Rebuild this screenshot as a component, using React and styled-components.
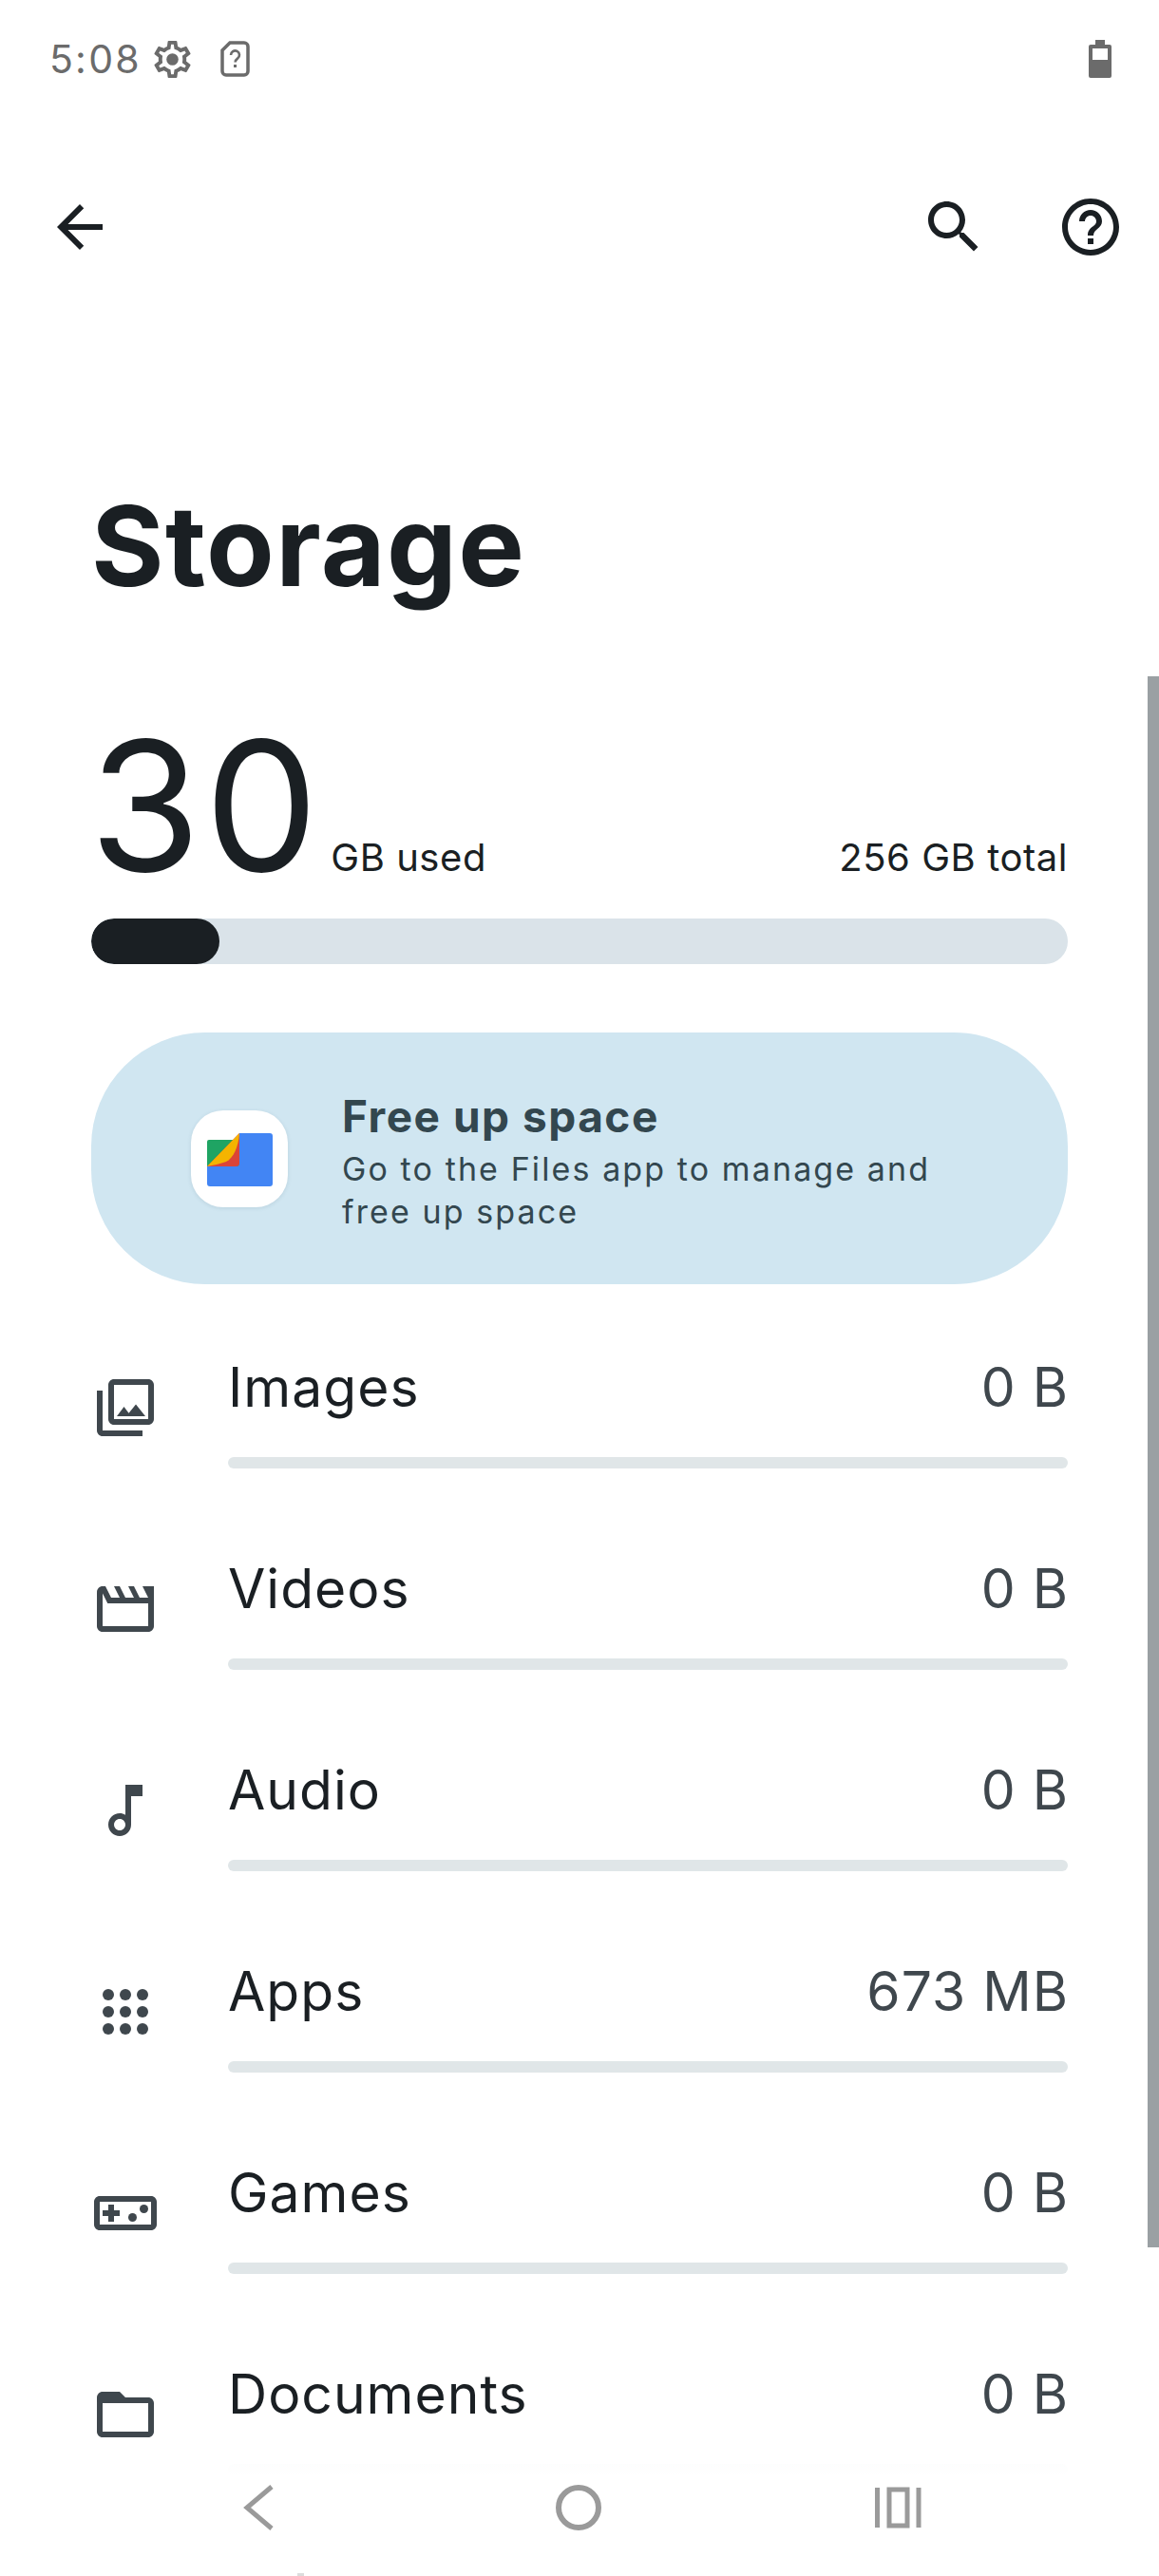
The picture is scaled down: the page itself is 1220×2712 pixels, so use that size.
import React from "react";
import styled, { createGlobalStyle } from "styled-components";

const GlobalStyle = createGlobalStyle`
  html, body {
    margin: 0;
    padding: 0;
    background: #fff;
  }
  body {
    font-family: Inter, "Open Sans", sans-serif;
    color: #1a1f23;
    overflow: hidden;
  }
`;

const Page = styled.div`
  position: relative;
  width: 1220px;
  height: 2712px;
  overflow: hidden;
  background: #fff;
`;

const StatusBar = styled.div`
  display: flex;
  align-items: center;
  height: 124px;
  padding: 0 50px 0 52px;
  color: #6b6b6b;
`;
const StatusTime = styled.div`
  font-size: 41px;
  font-weight: 400;
  letter-spacing: 2.2px;
  width: 106px;
`;
const StatusIcons = styled.div`
  display: flex;
  align-items: center;
  gap: 27px;
`;
const BatteryWrap = styled.div`
  margin-left: auto;
  display: flex;
`;

const Toolbar = styled.div`
  display: flex;
  align-items: center;
  margin-top: 79px;
  padding: 0 36px 0 48px;
`;
const ToolbarActions = styled.div`
  display: flex;
  gap: 72px;
  margin-left: auto;
`;
const Icon = styled.svg`
  display: block;
  flex: none;
  width: ${(p) => p.$size || 72}px;
  height: ${(p) => p.$size || 72}px;
  fill: ${(p) => p.$color || "#1a1f23"};
`;

const Content = styled.div`
  padding: 0 96px;
`;
const Title = styled.h1`
  margin: 230px 0 0;
  font-size: 117px;
  line-height: 140px;
  font-weight: 700;
  letter-spacing: 1.4px;
  color: #1a1f23;
`;
const Usage = styled.div`
  display: flex;
  align-items: baseline;
  margin-top: 108px;
`;
const UsageNumber = styled.div`
  font-size: 190px;
  line-height: 190px;
  font-weight: 400;
  letter-spacing: 4px;
  margin-left: -2px;
  margin-right: 9px;
`;
const UsageLabel = styled.div`
  font-size: 40px;
  font-weight: 400;
  letter-spacing: 0.55px;
  ${(p) => p.$end && "margin-left: auto;"}
`;
const Meter = styled.div`
  height: 48px;
  margin-top: 24px;
  border-radius: 24px;
  background: #dae3e9;
  overflow: hidden;
`;
const MeterFill = styled.div`
  height: 100%;
  border-radius: 24px;
  background: #1a1f23;
`;

const Card = styled.div`
  display: flex;
  align-items: center;
  height: 265px;
  margin-top: 72px;
  padding-left: 105px;
  border-radius: 120px;
  background: #d0e6f1;
  color: #33474f;
`;
const AppTile = styled.div`
  flex: none;
  width: 102px;
  height: 102px;
  border-radius: 34px;
  background: #fff;
  box-shadow: 0 1px 4px rgba(60, 90, 110, 0.14);
`;
const CardText = styled.div`
  margin-left: 57px;
  margin-top: 4px;
`;
const CardTitle = styled.div`
  font-size: 46px;
  line-height: 61px;
  margin-bottom: 3px;
  font-weight: 700;
  letter-spacing: 1.5px;
`;
const CardBody = styled.div`
  font-size: 34px;
  line-height: 44.5px;
  font-weight: 400;
  letter-spacing: 2.1px;
`;

const List = styled.div`
  margin-top: 75px;
`;
const Row = styled.div`
  display: grid;
  grid-template-columns: 72px 1fr;
  column-gap: 72px;
  height: 212px;
`;
const RowIcon = styled.div`
  margin-top: 19px;
`;
const RowHead = styled.div`
  display: flex;
  justify-content: space-between;
  height: 68px;
  font-size: 57px;
  line-height: 68px;
  letter-spacing: 1px;
`;
const RowValue = styled.div`
  color: #3f474d;
  margin-right: -1px;
`;
const RowBar = styled.div`
  height: 12px;
  margin-top: 39px;
  border-radius: 6px;
  background: #e0e6e8;
`;

const ScrollThumb = styled.div`
  position: absolute;
  top: 712px;
  right: 0;
  width: 12px;
  height: 1654px;
  background: #9aa0a3;
`;

const NavBar = styled.div`
  position: absolute;
  left: 0;
  right: 0;
  top: 2590px;
  bottom: 0;
  display: flex;
  align-items: flex-start;
  justify-content: space-between;
  padding: 14px 239px 0 236px;
  background: linear-gradient(rgba(255, 255, 255, 0.93), #fff 18px);
`;
const NavIcon = styled.svg`
  display: block;
  width: 72px;
  height: 72px;
  fill: none;
  stroke: #9a9a9a;
`;
const NavSpeck = styled.div`
  position: absolute;
  left: 313px;
  bottom: 0;
  width: 7px;
  height: 3px;
  background: #dcdcdc;
`;

const iconPaths = {
  back: "M20 11H7.83l5.59-5.59L12 4l-8 8 8 8 1.41-1.41L7.83 13H20v-2z",
  search:
    "M15.5 14h-.79l-.28-.27C15.41 12.59 16 11.11 16 9.5 16 5.91 13.09 3 9.5 3S3 5.91 3 9.5 5.91 16 9.5 16c1.61 0 3.09-.59 4.23-1.57l.27.28v.79l5 4.99L20.49 19l-4.99-5zm-6 0C7.01 14 5 11.99 5 9.5S7.01 5 9.5 5 14 7.01 14 9.5 11.99 14 9.5 14z",
  help: "M11 18h2v-2h-2v2zm1-16C6.48 2 2 6.48 2 12s4.48 10 10 10 10-4.48 10-10S17.52 2 12 2zm0 18c-4.41 0-8-3.59-8-8s3.59-8 8-8 8 3.59 8 8-3.59 8-8 8zm0-14c-2.21 0-4 1.79-4 4h2c0-1.1.9-2 2-2s2 .9 2 2c0 2-3 1.75-3 5h2c0-2.25 3-2.5 3-5 0-2.21-1.79-4-4-4z",
  images:
    "M20 4v12H8V4h12m0-2H8c-1.1 0-2 .9-2 2v12c0 1.1.9 2 2 2h12c1.1 0 2-.9 2-2V4c0-1.1-.9-2-2-2zm-8.5 9.67l1.69 2.26 2.48-3.1L19 15H9zM2 6v14c0 1.1.9 2 2 2h14v-2H4V6H2z",
  videos:
    "M4 6.47L5.76 10H20v8H4V6.47M22 4h-4l2 4h-3l-2-4h-2l2 4h-3l-2-4H8l2 4H7L5 4H4c-1.1 0-1.99.9-1.99 2L2 18c0 1.1.9 2 2 2h16c1.1 0 2-.9 2-2V4z",
  audio:
    "M12 3l.01 10.55c-.59-.34-1.27-.55-2-.55C7.79 13 6 14.79 6 17s1.79 4 4.01 4S14 19.21 14 17V7h4V3h-6zm-1.99 16c-1.1 0-2-.9-2-2s.9-2 2-2 2 .9 2 2-.9 2-2 2z",
  games:
    "M21 6H3c-1.1 0-2 .9-2 2v8c0 1.1.9 2 2 2h18c1.1 0 2-.9 2-2V8c0-1.1-.9-2-2-2zm0 10H3V8h18v8zM6 15h2v-2h2v-2H8V9H6v2H4v2h2z",
  folder:
    "M20 6h-8l-2-2H4c-1.1 0-1.99.9-1.99 2L2 18c0 1.1.9 2 2 2h16c1.1 0 2-.9 2-2V8c0-1.1-.9-2-2-2zm0 12H4V8h16v10z",
  gear: "M19.43 12.98c.04-.32.07-.64.07-.98 0-.34-.03-.66-.07-.98l2.11-1.65c.19-.15.24-.42.12-.64l-2-3.46c-.09-.16-.26-.25-.44-.25-.06 0-.12.01-.17.03l-2.49 1c-.52-.4-1.08-.73-1.69-.98l-.38-2.65C14.46 2.18 14.25 2 14 2h-4c-.25 0-.46.18-.49.42l-.38 2.65c-.61.25-1.17.59-1.69.98l-2.49-1c-.06-.02-.12-.03-.18-.03-.17 0-.34.09-.43.25l-2 3.46c-.13.22-.07.49.12.64l2.11 1.65c-.04.32-.07.65-.07.98 0 .33.03.66.07.98l-2.11 1.65c-.19.15-.24.42-.12.64l2 3.46c.09.16.26.25.44.25.06 0 .12-.01.17-.03l2.49-1c.52.4 1.08.73 1.69.98l.38 2.65c.03.24.24.42.49.42h4c.25 0 .46-.18.49-.42l.38-2.65c.61-.25 1.17-.59 1.69-.98l2.49 1c.06.02.12.03.18.03.17 0 .34-.09.43-.25l2-3.46c.12-.22.07-.49-.12-.64l-2.11-1.65zm-1.98-1.71c.04.31.05.52.05.73 0 .21-.02.43-.05.73l-.14 1.13.89.7 1.08.84-.7 1.21-1.27-.51-1.04-.42-.9.68c-.43.32-.84.56-1.25.73l-1.06.43-.16 1.13-.2 1.35h-1.4l-.19-1.35-.16-1.13-1.06-.43c-.43-.18-.83-.41-1.23-.71l-.91-.7-1.06.43-1.27.51-.7-1.21 1.08-.84.89-.7-.14-1.13c-.03-.31-.05-.54-.05-.74s.02-.43.05-.73l.14-1.13-.89-.7-1.08-.84.7-1.21 1.27.51 1.04.42.9-.68c.43-.32.84-.56 1.25-.73l1.06-.43.16-1.13.2-1.35h1.39l.19 1.35.16 1.13 1.06.43c.43.18.83.41 1.23.71l.91.7 1.06-.43 1.27-.51.7 1.21-1.07.85-.89.7.14 1.13z",
};

const ICON_GREY = "#3f474d";

function AppsIcon() {
  const spots = [6, 12, 18];
  return (
    <Icon viewBox="0 0 24 24" $color={ICON_GREY}>
      {spots.map((y) =>
        spots.map((x) => <circle key={`${x}-${y}`} cx={x} cy={y} r="2" />)
      )}
    </Icon>
  );
}

function GamesIcon() {
  return (
    <Icon viewBox="0 0 24 24" $color={ICON_GREY}>
      <path d={iconPaths.games} />
      <circle cx="14.5" cy="13.5" r="1.5" />
      <circle cx="18.5" cy="10.5" r="1.5" />
    </Icon>
  );
}

function PathIcon({ name }) {
  return (
    <Icon viewBox="0 0 24 24" $color={ICON_GREY}>
      <path d={iconPaths[name]} />
    </Icon>
  );
}

function FilesLogo() {
  return (
    <svg viewBox="0 0 102 102" width="102" height="102">
      <path d="M19 31h32v28H17V33a2 2 0 0 1 2-2z" fill="#1fa463" />
      <path d="M51 24v32a3 3 0 0 1-3 3H17z" fill="#db4437" />
      <path d="M51 24c-1 14-6 26-14 30-6 2-14 4-20 5z" fill="#f4b400" />
      <path
        d="M51 24h32a3 3 0 0 1 3 3v50a3 3 0 0 1-3 3H20a3 3 0 0 1-3-3V59h31a3 3 0 0 0 3-3z"
        fill="#4285f4"
      />
    </svg>
  );
}

const rows = [
  { label: "Images", value: "0 B", icon: <PathIcon name="images" /> },
  { label: "Videos", value: "0 B", icon: <PathIcon name="videos" /> },
  { label: "Audio", value: "0 B", icon: <PathIcon name="audio" /> },
  { label: "Apps", value: "673 MB", icon: <AppsIcon /> },
  { label: "Games", value: "0 B", icon: <GamesIcon /> },
  { label: "Documents", value: "0 B", icon: <PathIcon name="folder" /> },
];

export default function App() {
  return (
    <Page>
      <GlobalStyle />
      <StatusBar>
        <StatusTime>5:08</StatusTime>
        <StatusIcons>
          <Icon viewBox="0 0 24 24" $size={47} $color="#6b6b6b">
            <path d={iconPaths.gear} />
            <circle cx="12" cy="12" r="3.2" />
          </Icon>
          <svg width="31" height="38" viewBox="0 0 31 38" fill="none">
            <path
              d="M10 2h15a4 4 0 0 1 4 4v26a4 4 0 0 1-4 4H6a4 4 0 0 1-4-4V10z"
              stroke="#6b6b6b"
              strokeWidth="3.5"
            />
            <path
              d="M11 15a4.5 4.5 0 1 1 7 3.6c-1.7 1.2-2.4 2-2.4 4"
              stroke="#6b6b6b"
              strokeWidth="2.6"
            />
            <rect x="14" y="25" width="3" height="3" fill="#6b6b6b" />
          </svg>
        </StatusIcons>
        <BatteryWrap>
          <svg width="24" height="40" viewBox="0 0 24 40">
            <path
              d="M7 0h10v5h5a2 2 0 0 1 2 2v31a2 2 0 0 1-2 2H2a2 2 0 0 1-2-2V7a2 2 0 0 1 2-2h5z"
              fill="#6b6b6b"
            />
            <rect x="4" y="9" width="16" height="12" fill="#fff" />
          </svg>
        </BatteryWrap>
      </StatusBar>

      <Toolbar>
        <Icon viewBox="0 0 24 24">
          <path d={iconPaths.back} />
        </Icon>
        <ToolbarActions>
          <Icon viewBox="0 0 24 24">
            <path d={iconPaths.search} />
          </Icon>
          <Icon viewBox="0 0 24 24">
            <path d={iconPaths.help} />
          </Icon>
        </ToolbarActions>
      </Toolbar>

      <Content>
        <Title>Storage</Title>
        <Usage>
          <UsageNumber>30</UsageNumber>
          <UsageLabel>GB used</UsageLabel>
          <UsageLabel $end>256 GB total</UsageLabel>
        </Usage>
        <Meter>
          <MeterFill style={{ width: `${(135 / 1028) * 100}%` }} />
        </Meter>

        <Card>
          <AppTile>
            <FilesLogo />
          </AppTile>
          <CardText>
            <CardTitle>Free up space</CardTitle>
            <CardBody>
              Go to the Files app to manage and
              <br />
              free up space
            </CardBody>
          </CardText>
        </Card>

        <List>
          {rows.map((row) => (
            <Row key={row.label}>
              <RowIcon>{row.icon}</RowIcon>
              <div>
                <RowHead>
                  <div>{row.label}</div>
                  <RowValue>{row.value}</RowValue>
                </RowHead>
                <RowBar />
              </div>
            </Row>
          ))}
        </List>
      </Content>

      <ScrollThumb />

      <NavBar>
        <NavIcon viewBox="0 0 72 72" strokeWidth="5">
          <path d="M50 14L24 36l26 22" />
        </NavIcon>
        <NavIcon viewBox="0 0 72 72" strokeWidth="6">
          <circle cx="36" cy="36" r="21" />
        </NavIcon>
        <NavIcon viewBox="0 0 72 72" strokeWidth="5">
          <path d="M14.5 15v42M58 15v42" />
          <rect x="27" y="17" width="19" height="38" />
        </NavIcon>
        <NavSpeck />
      </NavBar>
    </Page>
  );
}
